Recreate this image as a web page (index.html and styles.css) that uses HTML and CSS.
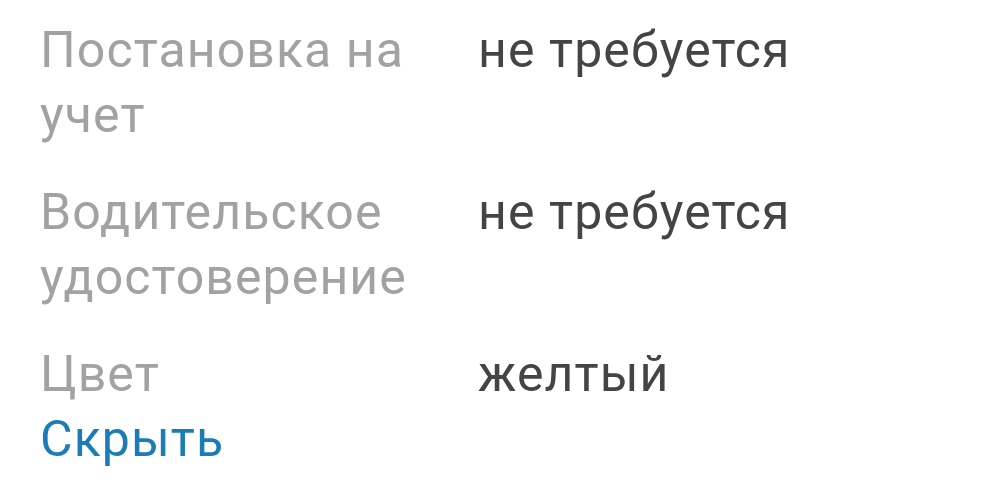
FILE: index.html
```html
<!DOCTYPE html>
<html lang="ru">
<head>
<meta charset="utf-8">
<link rel="stylesheet" href="styles.css">
</head>
<body>
<div class="details">
  <div class="row">
    <div class="label">Постановка на учет</div>
    <div class="value">не требуется</div>
  </div>
  <div class="row">
    <div class="label">Водительское удостоверение</div>
    <div class="value">не требуется</div>
  </div>
  <div class="row">
    <div class="label">Цвет</div>
    <div class="value">желтый</div>
  </div>
  <a class="toggle" href="#">Скрыть</a>
</div>
</body>
</html>
```
FILE: styles.css
```css
html, body {
  margin: 0;
  padding: 0;
  background: #ffffff;
}
body {
  font-family: Roboto, "Noto Sans", sans-serif;
  font-size: 50px;
  line-height: 65px;
  letter-spacing: 1.1px;
}
.details {
  padding: 18px 0 0 40px;
  display: flex;
  flex-direction: column;
  gap: 32px;
}
.row {
  display: grid;
  grid-template-columns: 410px 1fr;
  column-gap: 28px;
}
.label {
  color: #a2a2a2;
}
.value {
  color: #444444;
}
.toggle {
  color: #1b7db5;
  text-decoration: none;
  margin-top: -32px;
}
```
